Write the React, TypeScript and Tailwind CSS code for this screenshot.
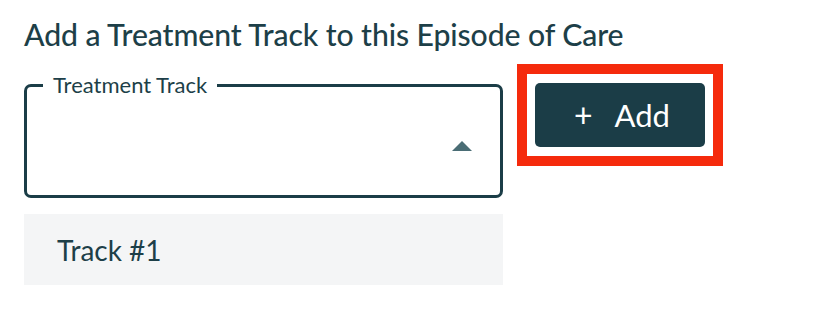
export default function App() {
  return (
    <div className="min-h-screen bg-white font-['Lato',sans-serif] text-[#1d3f48]">
      <div className="px-6 pt-[14px]">
        <h2 className="text-[30.2px] font-medium leading-[40px] tracking-[-0.1px]">
          Add a Treatment Track to this Episode of Care
        </h2>

        <div className="mt-[20px] flex items-start">
          <div className="w-[479px]">
            <fieldset className="h-[124px] rounded-[7px] border-[3px] border-[#1b3d47] px-[16px]">
              <legend className="px-[10px] text-[22px] leading-[22px] text-[#1d3f48]">Treatment Track</legend>
              <div className="flex h-[96px] items-center justify-end pr-[12px]">
                <svg width="20" height="10" viewBox="0 0 20 10" className="mt-[4px]">
                  <path d="M10 0 L20 10 L0 10 Z" fill="#4a6d75" />
                </svg>
              </div>
            </fieldset>

            <div className="mt-[16px] flex h-[71px] items-center bg-[#f4f5f6] px-[33px] text-[28px] text-[#1d3f48]">
              Track #1
            </div>
          </div>

          <div className="ml-[14px] -mt-[10px] border-[10px] border-[#f52a0c] px-[8px] py-[9px]">
            <button
              type="button"
              className="flex h-[64px] w-[170px] items-center justify-center gap-[22px] rounded-[5px] bg-[#1b3d47] pl-[4px] text-[31px] text-white"
            >
              <span className="text-[32px] leading-none">+</span>
              <span>Add</span>
            </button>
          </div>
        </div>
      </div>
    </div>
  );
}
